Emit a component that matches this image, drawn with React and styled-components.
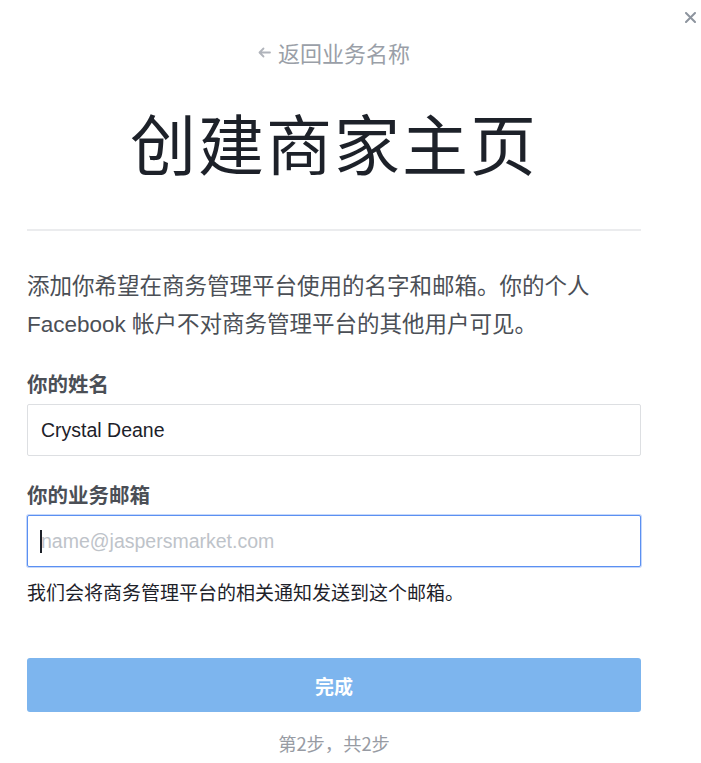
import React from "react";
import styled, { createGlobalStyle } from "styled-components";

const Global = createGlobalStyle`
  html, body { margin: 0; padding: 0; background: #ffffff; }
  body {
    font-family: "Liberation Sans", "Noto Sans CJK SC", Arial, sans-serif;
    -webkit-font-smoothing: antialiased;
  }
  * { box-sizing: border-box; }
`;

const Page = styled.div`
  position: relative;
  width: 701px;
  min-height: 763px;
  padding: 38px 0 0 27px;
`;

const Close = styled.button`
  position: absolute;
  top: 7px;
  right: 0;
  width: 22px;
  height: 20px;
  border: 0;
  background: transparent;
  padding: 0;
  display: flex;
  align-items: center;
  justify-content: center;
  cursor: pointer;
`;

const Content = styled.div`
  width: 614px;
  display: flex;
  flex-direction: column;
`;

const BackLink = styled.a`
  align-self: center;
  display: flex;
  align-items: center;
  gap: 7px;
  height: 28px;
  font-family: "Noto Sans CJK SC", "Liberation Sans", sans-serif;
  font-size: 22px;
  line-height: 28px;
  color: #9a9fa8;
  text-decoration: none;
  cursor: pointer;
`;

const Title = styled.h1`
  margin: 35px 0 0;
  text-align: center;
  font-family: "Noto Sans CJK SC", sans-serif;
  font-weight: 400;
  font-size: 66px;
  line-height: 80px;
  color: #1d2129;
  letter-spacing: 2px;
`;

const Divider = styled.hr`
  margin: 48px 0 0;
  border: 0;
  height: 2px;
  background: #ebecee;
`;

const Intro = styled.p`
  margin: 37px 0 0;
  font-family: "Liberation Sans", "Noto Sans CJK SC", sans-serif;
  font-size: 22.5px;
  line-height: 38px;
  color: #4b4f56;
`;

const Label = styled.label`
  display: block;
  margin-top: ${(p) => p.$top}px;
  font-family: "Noto Sans CJK SC", sans-serif;
  font-weight: 700;
  font-size: 20.5px;
  line-height: 24px;
  color: #4b4f56;
`;

const Field = styled.div`
  position: relative;
  margin-top: 9px;
`;

const Input = styled.input`
  display: block;
  width: 100%;
  height: 52px;
  padding: 0 13px;
  border: 1px solid ${(p) => (p.$focused ? "#5b90f2" : "#dddfe2")};
  box-shadow: ${(p) => (p.$focused ? "0 0 0 1px rgba(91,144,242,0.35)" : "none")};
  border-radius: 2px;
  outline: none;
  font-family: "Liberation Sans", Arial, sans-serif;
  font-size: 19.5px;
  color: #1d2129;
  background: #fff;
  &::placeholder { color: #bec3c9; }
`;

const Caret = styled.span`
  position: absolute;
  left: 13px;
  top: 15px;
  width: 2px;
  height: 23px;
  background: #1d2129;
`;

const Help = styled.div`
  margin-top: 13px;
  font-family: "Noto Sans CJK SC", sans-serif;
  font-size: 19px;
  line-height: 24px;
  color: #1d2129;
`;

const Submit = styled.button`
  margin-top: 54px;
  height: 54px;
  width: 100%;
  border: 0;
  border-radius: 3px;
  background: #7db5ee;
  color: #ffffff;
  font-family: "Noto Sans CJK SC", sans-serif;
  font-weight: 700;
  font-size: 19px;
  cursor: default;
`;

const Step = styled.div`
  margin-top: 19px;
  text-align: center;
  font-family: "Noto Sans CJK SC", sans-serif;
  font-size: 18.3px;
  line-height: 24px;
  color: #979ba3;
`;

export default function App() {
  return (
    <>
      <Global />
      <Page>
        <Close aria-label="关闭">
          <svg width="11" height="11" viewBox="0 0 11 11">
            <path d="M1 1 L10 10 M10 1 L1 10" stroke="#8d949e" strokeWidth="2" strokeLinecap="round" />
          </svg>
        </Close>
        <Content>
          <BackLink>
            <svg width="13" height="11" viewBox="0 0 13 11">
              <path d="M12 5.5 H2 M5.5 1.5 L1.5 5.5 L5.5 9.5" fill="none" stroke="#b0b4bb" strokeWidth="1.8" strokeLinecap="round" strokeLinejoin="round" />
            </svg>
            返回业务名称
          </BackLink>
          <Title>创建商家主页</Title>
          <Divider />
          <Intro>
            添加你希望在商务管理平台使用的名字和邮箱。你的个人
            <br />
            Facebook 帐户不对商务管理平台的其他用户可见。
          </Intro>
          <Label $top={27}>你的姓名</Label>
          <Field>
            <Input defaultValue="Crystal Deane" />
          </Field>
          <Label $top={26}>你的业务邮箱</Label>
          <Field>
            <Input $focused placeholder="name@jaspersmarket.com" />
            <Caret />
          </Field>
          <Help>我们会将商务管理平台的相关通知发送到这个邮箱。</Help>
          <Submit>完成</Submit>
          <Step>第2步，共2步</Step>
        </Content>
      </Page>
    </>
  );
}
